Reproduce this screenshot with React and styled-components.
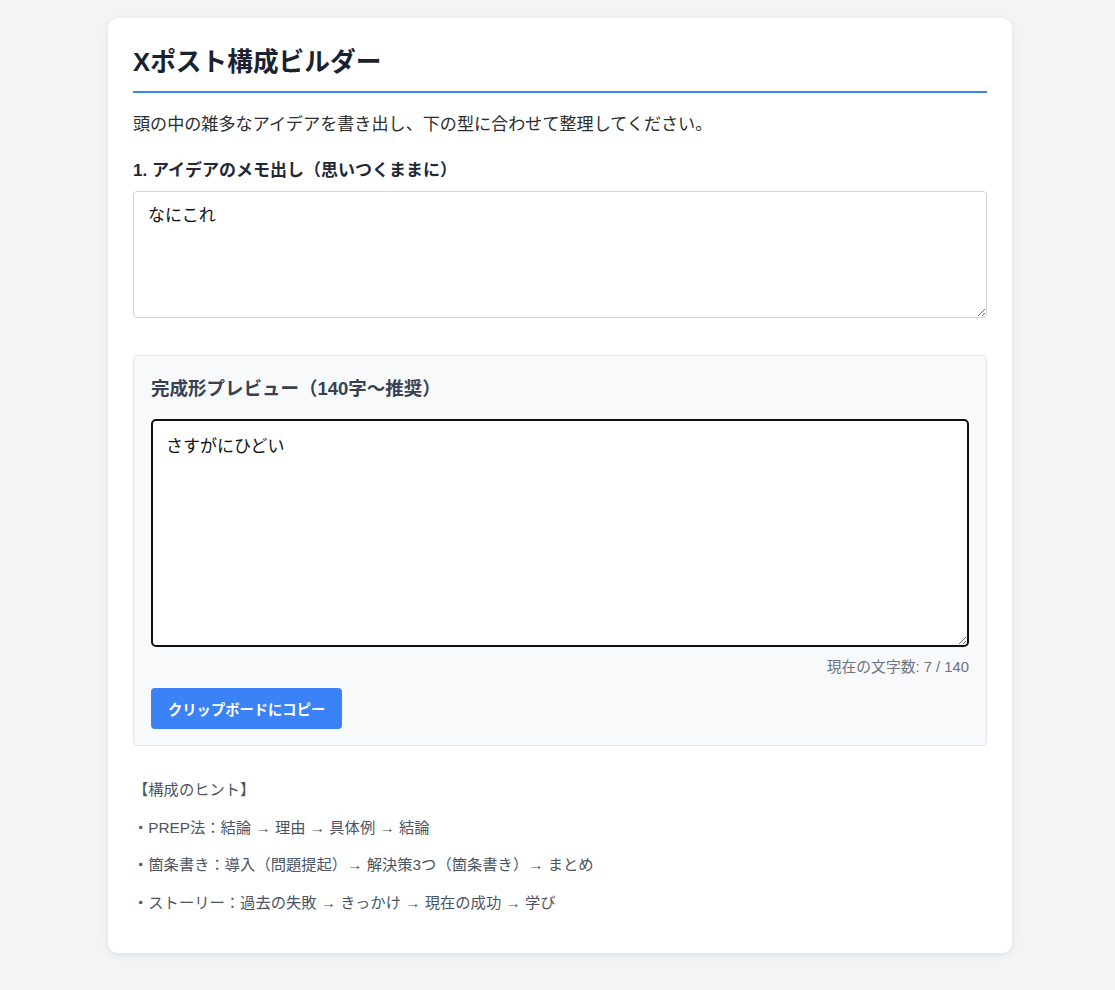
import React, { useState } from "react";
import styled, { createGlobalStyle } from "styled-components";

const GlobalStyle = createGlobalStyle`
  body {
    margin: 0;
    padding: 18px 0 36px 5px;
    background: #f3f4f6;
    font-family: "Liberation Sans", "Noto Sans CJK JP", sans-serif;
    color: #1f2937;
  }
`;

const App = () => {
  const [memo, setMemo] = useState("なにこれ");
  const [post, setPost] = useState("さすがにひどい");

  const copy = () => {
    if (navigator.clipboard) navigator.clipboard.writeText(post).catch(() => {});
  };

  return (
    <>
      <GlobalStyle />
      <Card>
        <Title>Xポスト構成ビルダー</Title>
        <Lead>頭の中の雑多なアイデアを書き出し、下の型に合わせて整理してください。</Lead>
        <Label htmlFor="memo">1. アイデアのメモ出し（思いつくままに）</Label>
        <MemoArea id="memo" value={memo} onChange={(e) => setMemo(e.target.value)} />

        <Preview>
          <PreviewTitle>完成形プレビュー（140字〜推奨）</PreviewTitle>
          <PostArea value={post} onChange={(e) => setPost(e.target.value)} />
          <Counter>現在の文字数: {post.length} / 140</Counter>
          <CopyButton onClick={copy}>クリップボードにコピー</CopyButton>
        </Preview>

        <Hints>
          <HintLine>【構成のヒント】</HintLine>
          <HintLine>・PREP法：結論 → 理由 → 具体例 → 結論</HintLine>
          <HintLine>・箇条書き：導入（問題提起）→ 解決策3つ（箇条書き）→ まとめ</HintLine>
          <HintLine>・ストーリー：過去の失敗 → きっかけ → 現在の成功 → 学び</HintLine>
        </Hints>
      </Card>
    </>
  );
};

export default App;

const Card = styled.div`
  width: 854px;
  margin: 0 auto;
  padding: 25px 25px 25px;
  background: #ffffff;
  border-radius: 10px;
  box-shadow: 0 2px 8px rgba(0, 0, 0, 0.08);
`;

const Title = styled.h1`
  margin: 0;
  font-size: 25.7px;
  line-height: 38px;
  font-weight: bold;
  color: #1a2230;
  padding-bottom: 10px;
  border-bottom: 2px solid #3b82f6;
`;

const Lead = styled.p`
  margin: 20px 0 0;
  font-size: 17.1px;
  line-height: 24px;
  color: #2d2d2d;
`;

const Label = styled.label`
  display: block;
  margin-top: 22px;
  font-size: 17px;
  line-height: 24px;
  font-weight: bold;
  color: #1f2937;
`;

const MemoArea = styled.textarea`
  display: block;
  box-sizing: border-box;
  width: 100%;
  height: 127px;
  margin-top: 8px;
  padding: 12px 14px;
  border: 1px solid #cfd4da;
  border-radius: 4px;
  font-family: inherit;
  font-size: 17px;
  line-height: 24px;
  color: #111;
  outline: none;
`;

const Preview = styled.div`
  margin-top: 37px;
  padding: 19px 17px 16px;
  background: #f8f9fa;
  border: 1px solid #e5e7eb;
  border-radius: 4px;
`;

const PreviewTitle = styled.h2`
  margin: 0;
  font-size: 18.5px;
  line-height: 27px;
  font-weight: bold;
  color: #374151;
`;

const PostArea = styled.textarea`
  display: block;
  box-sizing: border-box;
  width: 100%;
  height: 228px;
  margin-top: 17px;
  padding: 14px 13px;
  border: 2px solid #111;
  border-radius: 5px;
  background: #fff;
  font-family: inherit;
  font-size: 17px;
  line-height: 24px;
  color: #111;
  outline: none;
`;

const Counter = styled.div`
  margin-top: 10px;
  text-align: right;
  font-size: 14.8px;
  line-height: 20px;
  color: #6b7280;
`;

const CopyButton = styled.button`
  margin-top: 11px;
  height: 41px;
  padding: 0 17px;
  border: none;
  border-radius: 4px;
  background: #3b82f6;
  color: #fff;
  font-family: inherit;
  font-size: 14.3px;
  font-weight: bold;
  cursor: pointer;
  &:hover {
    background: #2f6fd8;
  }
`;

const Hints = styled.div`
  margin-top: 33px;
`;

const HintLine = styled.p`
  margin: 0 0 15.5px;
  font-size: 15.3px;
  line-height: 22px;
  color: #4b5563;
  &:last-child {
    margin-bottom: 14px;
  }
`;
